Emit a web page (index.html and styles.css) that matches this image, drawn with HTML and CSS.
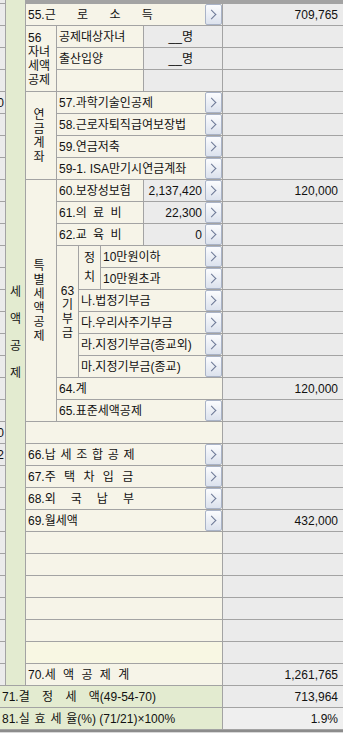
FILE: index.html
```html
<!DOCTYPE html>
<html lang="ko">
<head>
    <meta charset="UTF-8">
    <meta name="viewport" content="width=device-width, initial-scale=1.0">
    <title>세액공제</title>
    <link rel="stylesheet" href="styles.css">
</head>
<body>

    <div class="sheet">
        <!-- top band -->
        <div class="cell sd"></div>
        <div class="cell gr r32 side"><span>세<br>액<br>공<br>제</span></div>
        <div class="band c6"></div>

        <!-- 55 -->
        <div class="cell sd"></div>
        <div class="cell lb c5"><span class="txt">55.<span class="ws55">근 로 소 득</span></span><span class="btn"></span></div>
        <div class="cell vl num">709,765</div>

        <!-- 56 자녀세액공제 -->
        <div class="cell sd"></div>
        <div class="cell lb r3 grp"><span>56<br>자녀<br>세액<br>공제</span></div>
        <div class="cell lb c3"><span class="txt">공제대상자녀</span></div>
        <div class="cell vl cnt">__명</div>
        <div class="cell vl"></div>

        <div class="cell sd"></div>
        <div class="cell lb c3"><span class="txt">출산입양</span></div>
        <div class="cell vl cnt">__명</div>
        <div class="cell vl"></div>

        <div class="cell sd"></div>
        <div class="cell lb c3"></div>
        <div class="cell vl"></div>
        <div class="cell vl"></div>

        <!-- 연금계좌 -->
        <div class="cell sd">0</div>
        <div class="cell lb r4 stack"><span>연<br>금<br>계<br>좌</span></div>
        <div class="cell lb c4"><span class="txt">57.과학기술인공제</span><span class="btn"></span></div>
        <div class="cell vl"></div>

        <div class="cell sd"></div>
        <div class="cell lb c4"><span class="txt">58.근로자퇴직급여보장법</span><span class="btn"></span></div>
        <div class="cell vl"></div>

        <div class="cell sd"></div>
        <div class="cell lb c4"><span class="txt">59.연금저축</span><span class="btn"></span></div>
        <div class="cell vl"></div>

        <div class="cell sd"></div>
        <div class="cell lb c4"><span class="txt">59-1. ISA만기시연금계좌</span><span class="btn"></span></div>
        <div class="cell vl"></div>

        <!-- 특별세액공제 -->
        <div class="cell sd"></div>
        <div class="cell lb r11 stack"><span>특<br>별<br>세<br>액<br>공<br>제</span></div>
        <div class="cell lb c3"><span class="txt">60.보장성보험</span></div>
        <div class="cell vl amt"><span>2,137,420</span><span class="btn"></span></div>
        <div class="cell vl num">120,000</div>

        <div class="cell sd"></div>
        <div class="cell lb c3"><span class="txt">61.<span class="ws61">의 료 비</span></span></div>
        <div class="cell vl amt"><span>22,300</span><span class="btn"></span></div>
        <div class="cell vl"></div>

        <div class="cell sd"></div>
        <div class="cell lb c3"><span class="txt">62.<span class="ws61">교 육 비</span></span></div>
        <div class="cell vl amt"><span>0</span><span class="btn"></span></div>
        <div class="cell vl"></div>

        <!-- 63 기부금 -->
        <div class="cell sd"></div>
        <div class="cell lb r6 stack gift"><span>63<br>기<br>부<br>금</span></div>
        <div class="cell lb r2 stack pol"><span>정<br>치</span></div>
        <div class="cell lb c2"><span class="txt">10만원이하</span><span class="btn"></span></div>
        <div class="cell vl"></div>

        <div class="cell sd"></div>
        <div class="cell lb c2"><span class="txt">10만원초과</span><span class="btn"></span></div>
        <div class="cell vl"></div>

        <div class="cell sd"></div>
        <div class="cell lb c3"><span class="txt">나.법정기부금</span><span class="btn"></span></div>
        <div class="cell vl"></div>

        <div class="cell sd"></div>
        <div class="cell lb c3"><span class="txt">다.우리사주기부금</span><span class="btn"></span></div>
        <div class="cell vl"></div>

        <div class="cell sd"></div>
        <div class="cell lb c3"><span class="txt">라.지정기부금(종교외)</span><span class="btn"></span></div>
        <div class="cell vl"></div>

        <div class="cell sd"></div>
        <div class="cell lb c3"><span class="txt">마.지정기부금(종교)</span><span class="btn"></span></div>
        <div class="cell vl"></div>

        <div class="cell sd"></div>
        <div class="cell lb c4"><span class="txt">64.계</span></div>
        <div class="cell vl num">120,000</div>

        <div class="cell sd"></div>
        <div class="cell lb c4"><span class="txt">65.표준세액공제</span><span class="btn"></span></div>
        <div class="cell vl"></div>

        <div class="cell sd">0</div>
        <div class="cell lb c5"></div>
        <div class="cell vl"></div>

        <!-- 66 ~ 69 -->
        <div class="cell sd">2</div>
        <div class="cell lb c5"><span class="txt">66.<span class="ws66">납 세 조 합 공 제</span></span><span class="btn"></span></div>
        <div class="cell vl"></div>

        <div class="cell sd"></div>
        <div class="cell lb c5"><span class="txt">67.<span class="ws67">주 택 차 입 금</span></span><span class="btn"></span></div>
        <div class="cell vl"></div>

        <div class="cell sd"></div>
        <div class="cell lb c5"><span class="txt">68.<span class="ws68">외 국 납 부</span></span><span class="btn"></span></div>
        <div class="cell vl"></div>

        <div class="cell sd"></div>
        <div class="cell lb c5"><span class="txt">69.월세액</span><span class="btn"></span></div>
        <div class="cell vl num">432,000</div>

        <!-- empty rows -->
        <div class="cell sd"></div>
        <div class="cell lb c5"></div>
        <div class="cell vl"></div>

        <div class="cell sd"></div>
        <div class="cell lb c5"></div>
        <div class="cell vl"></div>

        <div class="cell sd"></div>
        <div class="cell lb c5"></div>
        <div class="cell vl"></div>

        <div class="cell sd"></div>
        <div class="cell lb c5"></div>
        <div class="cell vl"></div>

        <div class="cell sd"></div>
        <div class="cell lb c5"></div>
        <div class="cell vl"></div>

        <div class="cell sd"></div>
        <div class="cell lb c5 cur"></div>
        <div class="cell vl"></div>

        <!-- totals -->
        <div class="cell sd"></div>
        <div class="cell lb c5"><span class="txt">70.<span class="ws70">세 액 공 제 계</span></span></div>
        <div class="cell vl num">1,261,765</div>

        <div class="cell gr c7 sum"><span class="txt">71.<span class="ws71">결 정 세 액</span>(49-54-70)</span></div>
        <div class="cell vl num">713,964</div>

        <div class="cell gr c7 sum"><span class="txt">81.<span class="ws81">실 효 세 율</span>(%) (71/21)×100%</span></div>
        <div class="cell vl num last">1.9%</div>

        <div class="band bottom c8"></div>
    </div>

</body>
</html>
```

FILE: styles.css
```css
* {
    margin: 0;
    padding: 0;
    box-sizing: border-box;
}
body {
    width: 343px;
    background: #fff;
    color: #111;
    font-family: "Liberation Sans Narrow", "Liberation Sans", "Noto Sans CJK KR", sans-serif;
    font-size: 12px;
}
.sheet {
    display: grid;
    grid-template-columns: 5px 19px 30px 21px 21px 42px 78px 120px;
    grid-template-rows: 3px repeat(33, 21px) 3px;
    gap: 1px;
    background: #a3a3a3;
}
.cell {
    display: flex;
    align-items: center;
    overflow: hidden;
    white-space: nowrap;
    line-height: 14px;
}
.band {
    background: #a3a3a3;
}
.bottom {
    background: linear-gradient(#8c8c8c 0 2px, #d8d8d8 2px);
}

/* spans */
.c2 { grid-column: span 2; }
.c3 { grid-column: span 3; }
.c4 { grid-column: span 4; }
.c5 { grid-column: span 5; }
.c6 { grid-column: span 6; }
.c7 { grid-column: span 7; }
.c8 { grid-column: span 8; }
.r2 { grid-row: span 2; }
.r3 { grid-row: span 3; }
.r4 { grid-row: span 4; }
.r6 { grid-row: span 6; }
.r11 { grid-row: span 11; }
.r32 { grid-row: span 32; }

/* cell colours */
.lb {
    background: #f6f4e8;
    padding-left: 2px;
}
.cur {
    background: #f8f7e3;
}
.vl {
    background: #ebebeb;
}
.gr {
    background: #e3ebd0;
}
.sd {
    background: #ebebeb;
    justify-content: flex-end;
    padding-right: 1px;
}
.last {
    background: #efefef;
}

/* text */
.txt {
    flex: 1 1 auto;
    min-width: 0;
    overflow: hidden;
}
.num {
    justify-content: flex-end;
    padding-right: 5px;
}
.cnt {
    justify-content: flex-end;
    padding-right: 29px;
}
.amt {
    justify-content: flex-end;
}
.amt span:first-child {
    margin-right: 3px;
}
.sum {
    padding-left: 2px;
}

/* vertical labels */
.side {
    justify-content: center;
    text-align: center;
    padding-bottom: 20px;
    line-height: 27px;
}
.stack {
    justify-content: center;
    text-align: center;
    padding-left: 0;
    padding-right: 4px;
}
.grp span {
    line-height: 14px;
}
.gift {
    padding-right: 0;
}
.pol {
    padding-right: 0;
    line-height: 19px;
}

/* spaced labels */
.ws55 { word-spacing: 18px; }
.ws61 { word-spacing: 3px; }
.ws66 { word-spacing: 1.4px; }
.ws67 { word-spacing: 5px; }
.ws68 { word-spacing: 11.7px; }
.ws70 { word-spacing: 4px; }
.ws71 { word-spacing: 9px; }
.ws81 { word-spacing: 1.5px; }

/* lookup button */
.btn {
    flex: none;
    align-self: stretch;
    width: 17px;
    display: flex;
    align-items: center;
    justify-content: center;
    border: 1px solid #a9b3c7;
    border-radius: 2px;
    background: linear-gradient(#fbfcfe, #dce2ed);
}
.btn::after {
    content: "";
    width: 6px;
    height: 6px;
    margin-left: -4px;
    border-top: 1.2px solid #6c7896;
    border-right: 1.2px solid #6c7896;
    transform: rotate(45deg);
}
```
